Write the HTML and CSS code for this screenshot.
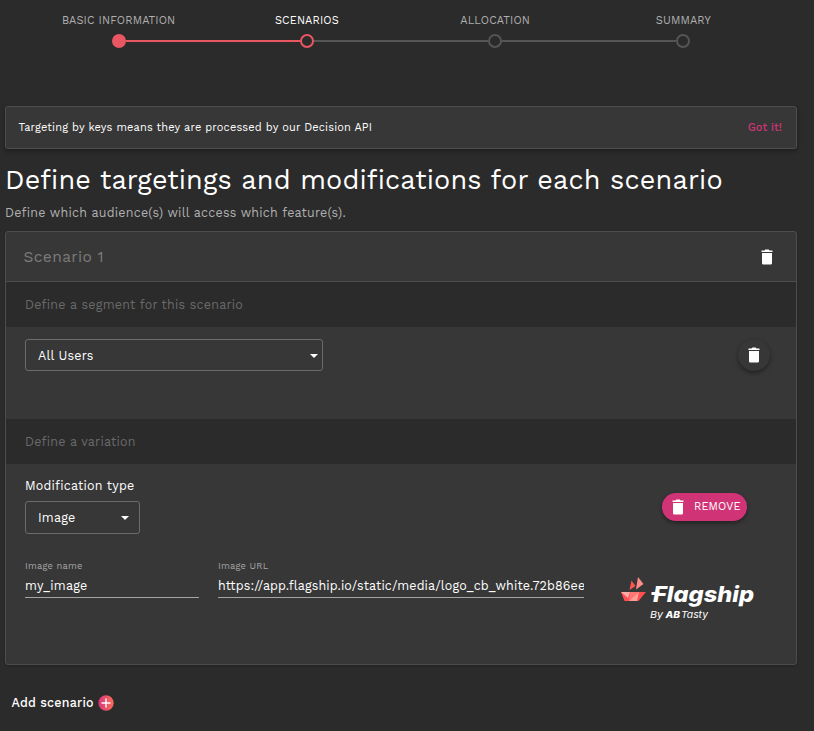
FILE: index.html
```
<!DOCTYPE html>
<html lang="en">
<head>
<meta charset="utf-8">
<title>Scenarios</title>
<link rel="stylesheet" href="styles.css">
</head>
<body>
<svg width="0" height="0" class="defs">
  <symbol id="trash" viewBox="0 0 12 16"><path d="M1 4h10v10.200q0 1.300-1.300 1.300H2.300Q1 15.500 1 14.200zM.5 1.500h3l.8-.9h3.400l.8.9h3V3H.5z" fill="#fff"/></symbol>
</svg>
<nav class="stepper">
  <div class="step done"><span>BASIC INFORMATION</span><i></i></div>
  <div class="step active"><span>SCENARIOS</span><i></i></div>
  <div class="step"><span>ALLOCATION</span><i></i></div>
  <div class="step"><span>SUMMARY</span><i></i></div>
</nav>
<main>
  <div class="notice"><span>Targeting by keys means they are processed by our Decision API</span><b>Got it!</b></div>
  <h1>Define targetings and modifications for each scenario</h1>
  <p class="sub">Define which audience(s) will access which feature(s).</p>
  <section class="card">
    <header><span>Scenario 1</span><svg class="trash"><use href="#trash"/></svg></header>
    <h2 class="segment">Define a segment for this scenario</h2>
    <div class="targeting">
      <div class="select users">All Users<i></i></div>
      <button class="round"><svg class="trash"><use href="#trash"/></svg></button>
    </div>
    <h2 class="variation">Define a variation</h2>
    <div class="modification">
      <div class="row">
        <div>
          <div class="label">Modification type</div>
          <div class="select type">Image<i></i></div>
        </div>
        <button class="remove"><svg class="trash"><use href="#trash"/></svg><span>REMOVE</span></button>
      </div>
      <div class="fields">
        <div class="field name"><label>Image name</label><div>my_image</div></div>
        <div class="field url"><label>Image URL</label><div>https://app.flagship.io/static/media/logo_cb_white.72b86ee4.svg</div></div>
        <svg class="logo" width="138" height="46" viewBox="0 0 138 46">
          <path d="M10.500 4.500 14.500 10 8.500 14z" fill="#ff5552"/>
          <path d="M17 1 22.500 8 15 13.500z" fill="#ff8c89"/>
          <path d="M0 16H25L17.500 25H3.500z" fill="#ff4f50"/>
          <path d="M0 16H9L7 22z" fill="#ffaaa7"/>
          <path d="M9 16H18L8 25z" fill="#ff7774"/>
          <path d="M18 16 16 25H8z" fill="#ff9d99"/>
          <text class="brand" x="32" y="25.500" textLength="101" lengthAdjust="spacingAndGlyphs">Flagship</text>
          <path d="M30.500 17.500h8" stroke="#fff" stroke-width="3"/>
          <text class="by" x="29" y="41.500" textLength="13" lengthAdjust="spacingAndGlyphs">By</text>
          <text class="by ab" x="44.500" y="41.500" textLength="14.500" lengthAdjust="spacingAndGlyphs">AB</text>
          <text class="by" x="60" y="41.500" textLength="27" lengthAdjust="spacingAndGlyphs">Tasty</text>
        </svg>
      </div>
    </div>
  </section>
  <div class="add">Add scenario
    <svg width="16" height="16" viewBox="0 0 16 16"><defs><linearGradient id="g"><stop offset="0" stop-color="#d6357c"/><stop offset="1" stop-color="#fb6d56"/></linearGradient></defs><circle cx="8" cy="8" r="7.700" fill="url(#g)"/><path d="M8 3.500v9M3.500 8h9" stroke="#fff" stroke-width="1.400"/></svg>
  </div>
</main>
</body>
</html>
```
FILE: styles.css
```
* { box-sizing: border-box; }
body { margin: 0; height: 731px; overflow: hidden; background: #2b2b2b; color: #fff; font: 12.5px/16px "Work Sans", Inter, sans-serif; letter-spacing: .21px; }
.defs { display: block; }
.trash { display: block; width: 12px; height: 16px; }

.stepper { display: flex; width: 753px; height: 106px; margin-left: 24.500px; padding-top: 13px; }
.step { position: relative; flex: 1; display: flex; flex-direction: column; align-items: center; gap: 5px; font-size: 11px; letter-spacing: .13px; color: #b0b0b0; }
.step i { position: relative; width: 14px; height: 14px; border: 2px solid #555; border-radius: 50%; background: #2b2b2b; }
.step:not(:last-child)::after { content: ""; position: absolute; left: calc(50% + 7px); right: calc(-50% + 7px); top: 27px; height: 2px; background: #555; }
.step.done i { border-color: #e95763; background: #e95763; }
.step.done::after { background: #e95763 !important; }
.step.active { color: #fff; }
.step.active i { border-color: #e95763; }

main { width: 792px; margin-left: 5px; }
.notice { display: flex; justify-content: space-between; align-items: center; height: 43px; padding: 0 14px 0 12.500px; border: 1px solid #4d4d4d; border-radius: 3px; background: #373737; box-shadow: 0 2px 4px rgba(0,0,0,.3); font-size: 11px; letter-spacing: .16px; }
.notice b { color: #d13476; font-weight: 500; letter-spacing: .1px; }
h1 { margin: 14px 0 0; font-size: 27px; line-height: 34px; font-weight: 400; letter-spacing: .175px; white-space: nowrap; }
.sub { margin: 8px 0 0; color: #b0b0b0; }

.card { height: 434px; margin-top: 10px; border: 1px solid #4d4d4d; border-radius: 3px; background: #373737; box-shadow: 0 1px 2px rgba(0,0,0,.2); }
.card header { display: flex; justify-content: space-between; align-items: center; height: 50px; padding: 0 23px 0 17.500px; border-bottom: 1px solid #4d4d4d; font-size: 15.5px; letter-spacing: .37px; color: #7c7c7c; }
.card h2 { display: flex; align-items: center; height: 45px; margin: 0; padding-left: 19px; background: #2b2b2b; color: #6a6a6a; font-size: 12.5px; font-weight: 400; }
.targeting { display: flex; justify-content: space-between; height: 92px; padding: 12px 26px 0 19px; }
.select { display: flex; justify-content: space-between; align-items: center; height: 32px; padding-left: 12px; border: 1px solid #6c6c6c; border-radius: 3px; }
.select i { border: 4px solid transparent; border-top-color: #fff; border-bottom: 0; }
.users { width: 298px; padding-right: 4.500px; padding-top: 1px; }
button { border: 0; padding: 0; font: inherit; color: #fff; }
.round { display: grid; place-items: center; width: 32px; height: 32px; border-radius: 50%; background: #373737; box-shadow: 0 2px 4px rgba(0,0,0,.4); }

.modification { padding: 14px 37px 0 19px; }
.row { display: flex; justify-content: space-between; }
.type { width: 115px; height: 33px; margin-top: 7px; padding-right: 10.500px; }
.remove { display: flex; align-items: center; gap: 10px; width: 85px; height: 28px; margin: 15px 12px 0 0; padding-left: 10px; border-radius: 14px; background: #d13476; box-shadow: 0 2px 4px rgba(0,0,0,.4); font-size: 11px; letter-spacing: .12px; }
.remove span { padding-bottom: 1px; }
.fields { display: flex; align-items: flex-start; margin-top: 24px; }
.field { flex: none; border-bottom: 1px solid #a5a5a5; height: 40px; overflow: hidden; white-space: nowrap; }
.field label { display: block; font-size: 9.3px; line-height: 16px; color: #a5a5a5; }
.field div { margin-top: 4px; }
.name { width: 174px; margin-right: 19px; }
.url { width: 366px; margin-right: 37px; }
.url div { letter-spacing: .13px; }
.logo { flex: none; margin-top: 18px; fill: #fff; letter-spacing: 0; }
.brand { font: italic 800 22px Inter, sans-serif; }
.by { font: italic 400 9.300px Inter, sans-serif; }
.ab { font-weight: 800; }
.add { display: flex; align-items: center; gap: 4px; margin: 30px 0 0 6.500px; font-weight: 500; }
```
